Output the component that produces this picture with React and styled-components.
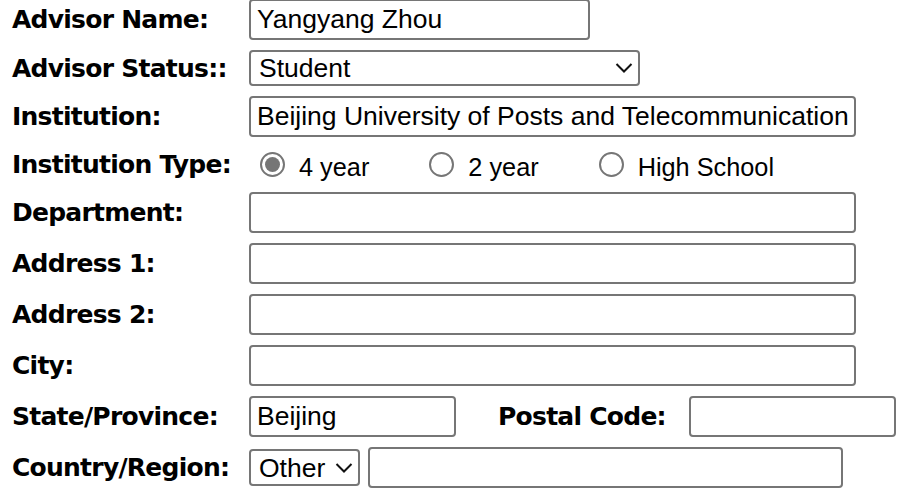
import React from 'react';
import styled, { createGlobalStyle } from 'styled-components';

const GlobalStyle = createGlobalStyle`
  html, body {
    margin: 0;
    padding: 0;
    background: #fff;
  }
`;

const Form = styled.div`
  display: flex;
  flex-direction: column;
  gap: 10px;
  padding: 0 0 0 12px;
  margin-top: -1px;
  width: 903px;
  font-family: 'DejaVu Sans', Verdana, sans-serif;
`;

const Row = styled.div`
  display: flex;
  align-items: center;
  height: ${props => props.h || 41}px;
`;

const Label = styled.div`
  width: ${props => props.w || 237}px;
  flex-shrink: 0;
  font-family: 'DejaVu Sans', Verdana, sans-serif;
  font-weight: bold;
  font-size: 25px;
  letter-spacing: -0.75px;
  color: #000;
  white-space: nowrap;
  margin-left: ${props => props.ml || 0}px;
`;

const TextInput = styled.input`
  box-sizing: border-box;
  width: ${props => props.w}px;
  height: 41px;
  border: 2px solid #767676;
  border-radius: 4px;
  padding: 0 6px;
  margin: 0;
  margin-left: ${props => props.ml || 0}px;
  font-family: 'Liberation Sans', Arial, sans-serif;
  font-size: 26.5px;
  color: #000;
  background: #fff;
  outline: none;
`;

const SelectWrap = styled.div`
  position: relative;
  width: ${props => props.w}px;
  height: ${props => props.h || 36}px;
  flex-shrink: 0;
`;

const Select = styled.select`
  appearance: none;
  box-sizing: border-box;
  width: 100%;
  height: 100%;
  border: 2px solid #767676;
  border-radius: 4px;
  padding: 0 0 0 8px;
  margin: 0;
  font-family: 'Liberation Sans', Arial, sans-serif;
  font-size: 26.5px;
  color: #000;
  background: #fff;
  outline: none;
`;

const Chevron = styled.svg`
  position: absolute;
  right: ${props => props.r}px;
  top: 50%;
  transform: translateY(-50%);
  pointer-events: none;
`;

const RadioGroup = styled.div`
  display: flex;
  align-items: center;
  padding-left: 11px;
`;

const Option = styled.label`
  display: flex;
  align-items: center;
  gap: 14px;
  margin-right: 60px;
  font-family: 'Liberation Sans', Arial, sans-serif;
  font-size: 25.3px;
  color: #000;
  padding-top: 5px;
`;

const Radio = styled.input`
  appearance: none;
  box-sizing: border-box;
  width: 25px;
  height: 25px;
  margin: 0;
  margin-top: -5px;
  border: 2px solid #767676;
  border-radius: 50%;
  background: #fff;
  display: grid;
  place-items: center;

  &:checked::after {
    content: '';
    width: 15px;
    height: 15px;
    border-radius: 50%;
    background: #767676;
  }
`;

const ChevronIcon = ({ r }) => (
  <Chevron r={r} width="18" height="11" viewBox="0 0 18 11">
    <path d="M1.5 1.5 L9 9 L16.5 1.5" fill="none" stroke="#111" strokeWidth="2" />
  </Chevron>
);

const App = () => (
  <>
    <GlobalStyle />
    <Form>
      <Row>
        <Label>Advisor Name:</Label>
        <TextInput w={341} defaultValue="Yangyang Zhou" />
      </Row>
      <Row h={36}>
        <Label>Advisor Status::</Label>
        <SelectWrap w={391}>
          <Select defaultValue="Student">
            <option>Student</option>
            <option>Faculty</option>
          </Select>
          <ChevronIcon r={7} />
        </SelectWrap>
      </Row>
      <Row>
        <Label>Institution:</Label>
        <TextInput w={607} defaultValue="Beijing University of Posts and Telecommunications" />
      </Row>
      <Row h={35}>
        <Label>Institution Type:</Label>
        <RadioGroup>
          <Option>
            <Radio type="radio" name="itype" defaultChecked />
            4 year
          </Option>
          <Option>
            <Radio type="radio" name="itype" />
            2 year
          </Option>
          <Option>
            <Radio type="radio" name="itype" />
            High School
          </Option>
        </RadioGroup>
      </Row>
      <Row>
        <Label>Department:</Label>
        <TextInput w={607} />
      </Row>
      <Row>
        <Label>Address 1:</Label>
        <TextInput w={607} />
      </Row>
      <Row>
        <Label>Address 2:</Label>
        <TextInput w={607} />
      </Row>
      <Row>
        <Label>City:</Label>
        <TextInput w={607} />
      </Row>
      <Row>
        <Label>State/Province:</Label>
        <TextInput w={207} defaultValue="Beijing" />
        <Label w={191} ml={42}>Postal Code:</Label>
        <TextInput w={207} />
      </Row>
      <Row>
        <Label>Country/Region:</Label>
        <SelectWrap w={111} h={37}>
          <Select defaultValue="Other">
            <option>Other</option>
            <option>United States</option>
          </Select>
          <ChevronIcon r={7} />
        </SelectWrap>
        <TextInput w={475} ml={8} />
      </Row>
    </Form>
  </>
);

export default App;
